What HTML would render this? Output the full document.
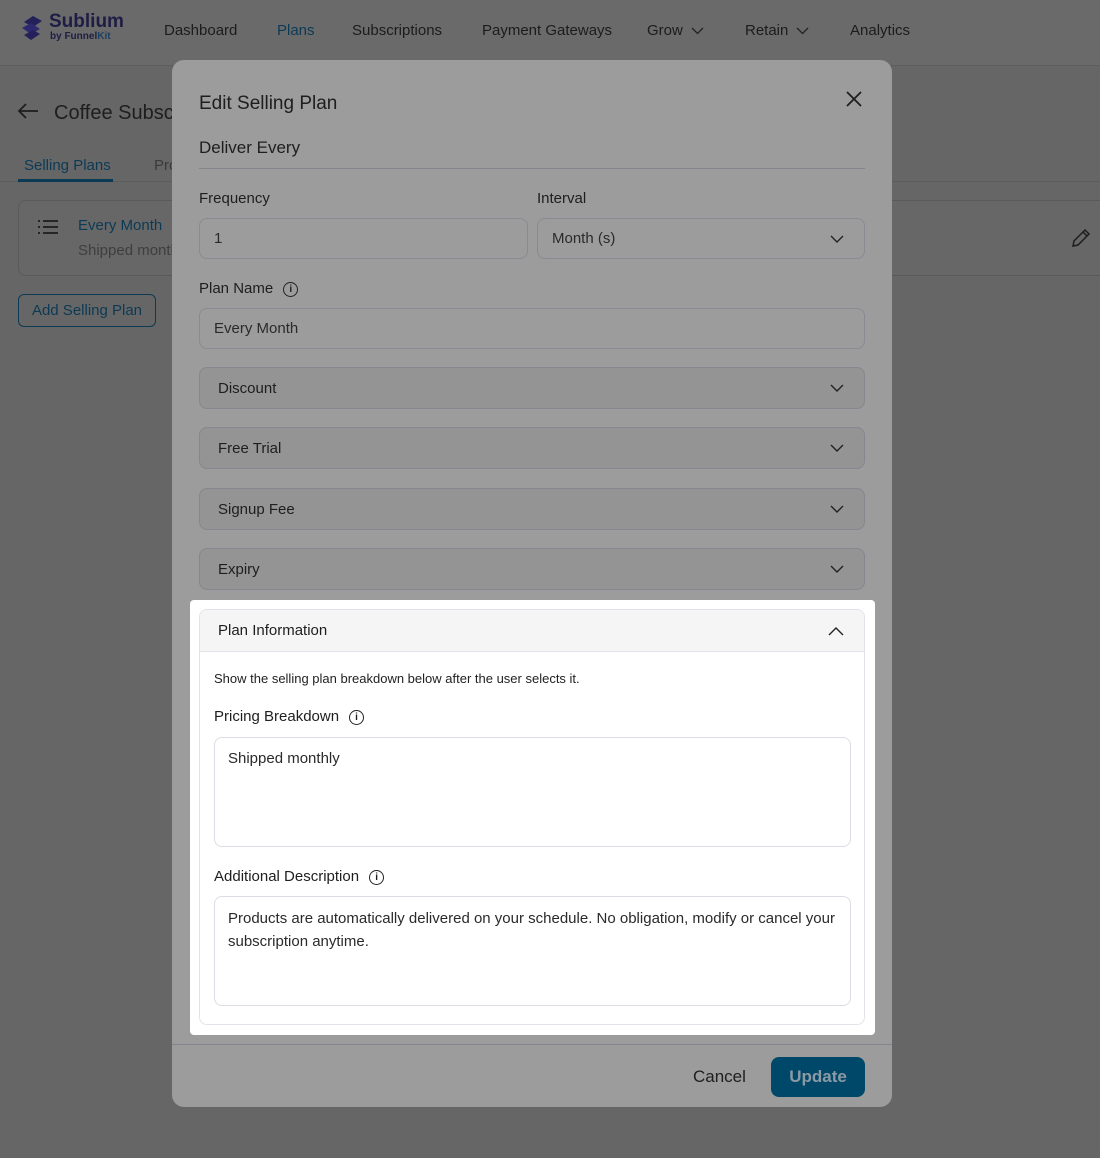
<!DOCTYPE html>
<html><head><meta charset="utf-8"><style>
*{box-sizing:border-box;margin:0;padding:0}
body{width:1100px;height:1158px;background:#666;font-family:"Liberation Sans",sans-serif;position:relative;overflow:hidden;color:#1e1e1e}
.a{position:absolute;white-space:nowrap}
.hdr{left:0;top:0;width:1100px;height:66px;background:#6a6a6a;border-bottom:1px solid #5e5e5e}
.nav{top:22px;font-size:15px;color:#1c1c1c}
.modal{left:172px;top:60px;width:720px;height:1047px;background:#9c9c9c;border-radius:12px}
.lbl{font-size:15px;color:#1e1e1e}
.inp{height:41px;border:1px solid #8a8a92;border-radius:8px;background:#9c9c9c;font-size:15px;color:#2a2a2a;padding:11px 14px}
.acc{left:199px;width:666px;height:42px;border:1px solid #86868e;border-radius:8px;background:#949494;font-size:15px;padding:12px 18px;color:#1e1e1e}
.chev{position:absolute;right:20px;top:16px}
.info{display:inline-block;width:15px;height:15px;border:1.3px solid #222;border-radius:50%;font-size:10px;text-align:center;line-height:13px;font-weight:bold;vertical-align:1px;margin-left:10px}
</style></head><body>
<div class="a hdr"></div>
<svg class="a" style="left:20px;top:13px" width="24" height="30" viewBox="0 0 24 30"><path d="M4 9 L13 3 L22 8 L13 14 Z" fill="#24205a"/><path d="M2 15 L11 10 L20 16 L11 21 Z" fill="#2d2870"/><path d="M4 22 L13 17 L20 21 L11 27 Z" fill="#24205a"/></svg>
<div class="a" style="left:49px;top:11px;font-size:19px;font-weight:bold;color:#1e1d45">Sublium</div>
<div class="a" style="left:50px;top:31px;font-size:10px;font-weight:bold;color:#1e1d45">by Funnel<span style="color:#1c4060">Kit</span></div>
<div class="a nav" style="left:164px">Dashboard</div>
<div class="a nav" style="left:277px;color:#0c3a55">Plans</div>
<div class="a nav" style="left:352px">Subscriptions</div>
<div class="a nav" style="left:482px">Payment Gateways</div>
<div class="a nav" style="left:647px">Grow</div>
<svg class="a" style="left:691px;top:27px" width="13" height="8" viewBox="0 0 13 8"><path d="M1 1L6.5 6.5L12 1" fill="none" stroke="#222" stroke-width="1.3"/></svg>
<div class="a nav" style="left:745px">Retain</div>
<svg class="a" style="left:796px;top:27px" width="13" height="8" viewBox="0 0 13 8"><path d="M1 1L6.5 6.5L12 1" fill="none" stroke="#222" stroke-width="1.3"/></svg>
<div class="a nav" style="left:850px">Analytics</div>

<svg class="a" style="left:17px;top:103px" width="22" height="16" viewBox="0 0 22 16"><path d="M21 8H2M9 1L2 8L9 15" fill="none" stroke="#1e1e1e" stroke-width="1.8"/></svg>
<div class="a" style="left:54px;top:102px;font-size:20px;color:#1e1e1e">Coffee Subscription</div>
<div class="a" style="left:0;top:181px;width:1100px;height:1px;background:#5c5c5c"></div>
<div class="a" style="left:24px;top:157px;font-size:15px;color:#0c3a55">Selling Plans</div>
<div class="a" style="left:18px;top:179px;width:95px;height:3px;background:#0c3a55"></div>
<div class="a" style="left:154px;top:157px;font-size:15px;color:#3a3a3a">Products</div>
<div class="a" style="left:18px;top:200px;width:1100px;height:76px;border:1px solid #5a5a5a;border-radius:8px;background:#676767"></div>
<svg class="a" style="left:38px;top:220px" width="20" height="14" viewBox="0 0 20 14"><path d="M0 1h2M0 7h2M0 13h2M5 1h15M5 7h15M5 13h15" stroke="#1e1e1e" stroke-width="1.8"/></svg>
<div class="a" style="left:78px;top:217px;font-size:15px;color:#0c3a55">Every Month</div>
<div class="a" style="left:78px;top:242px;font-size:15px;color:#3e3e3e">Shipped monthly</div>
<svg class="a" style="left:1070px;top:227px" width="22" height="22" viewBox="0 0 22 22"><path d="M3 19 L4 14 L15 3 L19 7 L8 18 Z M13 5 L17 9" fill="none" stroke="#1e1e1e" stroke-width="1.5"/></svg>
<div class="a" style="left:18px;top:294px;width:138px;height:33px;border:1px solid #0c3a55;border-radius:6px;font-size:15px;color:#0c3a55;padding:7px 0;text-align:center">Add Selling Plan</div>

<div class="a modal"></div>
<div class="a" style="left:199px;top:93px;font-size:19px;color:#1e1e1e">Edit Selling Plan</div>
<svg class="a" style="left:845px;top:90px" width="18" height="18" viewBox="0 0 18 18"><path d="M2 2L16 16M16 2L2 16" stroke="#1e1e1e" stroke-width="1.8"/></svg>
<div class="a" style="left:199px;top:138px;font-size:17px;color:#1e1e1e">Deliver Every</div>
<div class="a" style="left:199px;top:168px;width:666px;height:1px;background:#84848c"></div>
<div class="a lbl" style="left:199px;top:190px">Frequency</div>
<div class="a lbl" style="left:537px;top:190px">Interval</div>
<div class="a inp" style="left:199px;top:218px;width:329px">1</div>
<div class="a inp" style="left:537px;top:218px;width:328px">Month (s)<svg class="chev" width="14" height="9" viewBox="0 0 14 9"><path d="M1 1L7 7L13 1" fill="none" stroke="#222" stroke-width="1.4"/></svg></div>
<div class="a lbl" style="left:199px;top:280px">Plan Name<span class="info">i</span></div>
<div class="a inp" style="left:199px;top:308px;width:666px">Every Month</div>
<div class="a acc" style="top:367px">Discount<svg class="chev" width="14" height="9" viewBox="0 0 14 9"><path d="M1 1L7 7L13 1" fill="none" stroke="#222" stroke-width="1.4"/></svg></div>
<div class="a acc" style="top:427px">Free Trial<svg class="chev" width="14" height="9" viewBox="0 0 14 9"><path d="M1 1L7 7L13 1" fill="none" stroke="#222" stroke-width="1.4"/></svg></div>
<div class="a acc" style="top:488px">Signup Fee<svg class="chev" width="14" height="9" viewBox="0 0 14 9"><path d="M1 1L7 7L13 1" fill="none" stroke="#222" stroke-width="1.4"/></svg></div>
<div class="a acc" style="top:548px">Expiry<svg class="chev" width="14" height="9" viewBox="0 0 14 9"><path d="M1 1L7 7L13 1" fill="none" stroke="#222" stroke-width="1.4"/></svg></div>
<div class="a" style="left:172px;top:1044px;width:720px;height:1px;background:#85858e"></div>
<div class="a" style="left:693px;top:1067px;font-size:17px;color:#1e1e1e">Cancel</div>
<div class="a" style="left:771px;top:1057px;width:94px;height:40px;background:#00486a;border-radius:8px;color:#8c9aa4;font-size:17px;font-weight:bold;text-align:center;line-height:40px">Update</div>

<div class="a" style="left:190px;top:600px;width:685px;height:435px;background:#fff;border-radius:4px"></div>
<div class="a" style="left:199px;top:609px;width:666px;height:416px;border:1px solid #e2e2ea;border-radius:8px;background:#fff;overflow:hidden">
 <div style="height:42px;background:#f5f5f6;border-bottom:1px solid #e2e2ea;font-size:15px;padding:12px 18px;position:relative">Plan Information<svg class="chev" style="top:17px" width="16" height="9" viewBox="0 0 16 9"><path d="M1 8L8 1L15 8" fill="none" stroke="#222" stroke-width="1.4"/></svg></div>
</div>
<div class="a" style="left:214px;top:671px;font-size:13px;color:#222">Show the selling plan breakdown below after the user selects it.</div>
<div class="a lbl" style="left:214px;top:708px">Pricing Breakdown<span class="info">i</span></div>
<div class="a" style="left:214px;top:737px;width:637px;height:110px;border:1px solid #dcdce4;border-radius:8px;padding:12px 13px;font-size:15px;color:#2a2a2a">Shipped monthly</div>
<div class="a lbl" style="left:214px;top:868px">Additional Description<span class="info">i</span></div>
<div class="a" style="left:214px;top:896px;width:637px;height:110px;border:1px solid #dcdce4;border-radius:8px;padding:10px 13px;font-size:15px;line-height:23px;color:#2a2a2a;white-space:normal">Products are automatically delivered on your schedule. No obligation, modify or cancel your subscription anytime.</div>
</body></html>
